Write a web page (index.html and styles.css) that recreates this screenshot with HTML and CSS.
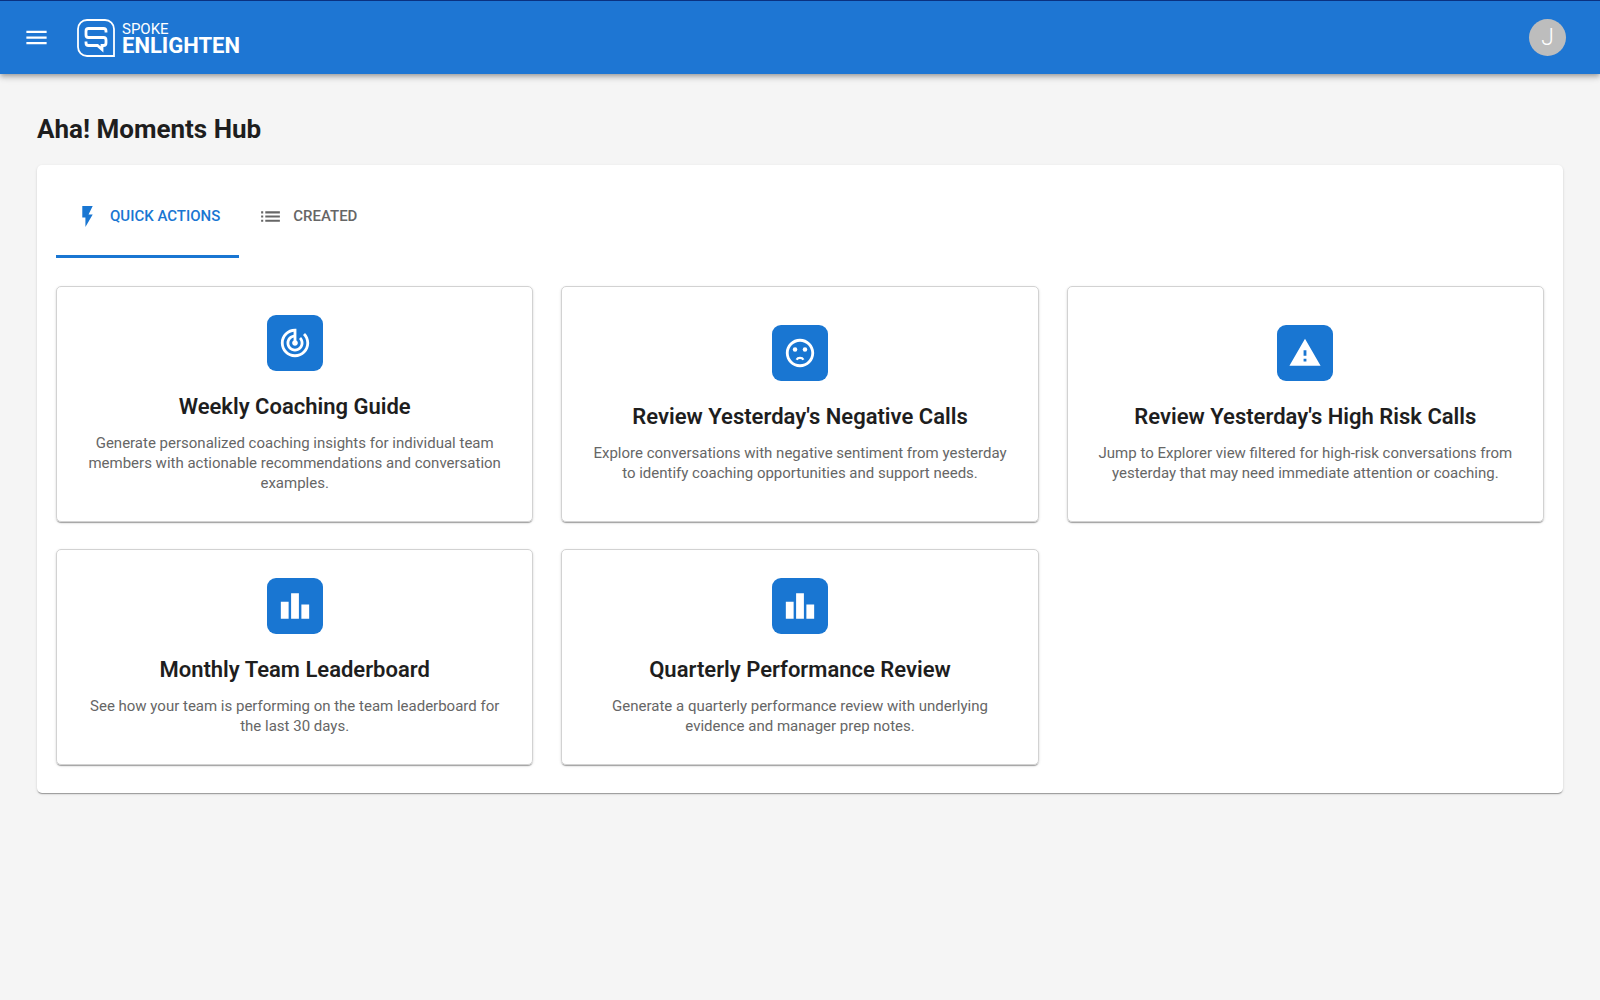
FILE: index.html
```html
<!DOCTYPE html>
<html lang="en">
<head>
  <meta charset="UTF-8" />
  <meta name="viewport" content="width=device-width, initial-scale=1.0" />
  <title>Aha! Moments Hub</title>
  <link rel="stylesheet" href="styles.css">
</head>
<body>
  <header class="app-bar">
    <button class="menu-btn" type="button" aria-label="Open menu">
      <svg viewBox="0 0 24 24"><path d="M3 18h18v-2H3v2zm0-5h18v-2H3v2zm0-7v2h18V6H3z"/></svg>
    </button>
    <a class="brand" href="#">
      <svg class="brand-mark" viewBox="0 0 38 38">
        <path d="M10 1h18a9 9 0 0 1 9 9v27H10a9 9 0 0 1-9-9V10a9 9 0 0 1 9-9z" stroke-width="1.8"/>
        <path d="M29 13.5V12a2.500 2.500 0 0 0-2.500-2.500h-15A2.500 2.500 0 0 0 9 12v4a2.500 2.500 0 0 0 2.500 2.500h15A2.500 2.500 0 0 1 29 21v3a2.500 2.500 0 0 1-2.500 2.500H25v4l-4.500-4h-9A2.500 2.500 0 0 1 9 24v-1.500" stroke-width="2.8"/>
      </svg>
      <span class="brand-text">
        <span class="brand-top">SPOKE</span>
        <span class="brand-name">ENLIGHTEN</span>
      </span>
    </a>
    <button class="avatar" type="button">J</button>
  </header>

  <main class="page">
    <h1>Aha! Moments Hub</h1>
    <section class="panel">
      <div class="tabs" role="tablist">
        <button class="tab active" type="button" role="tab" aria-selected="true">
          <svg viewBox="0 0 24 24"><path d="M7 2v11h3v9l7-12h-4l4-8z"/></svg>
          QUICK ACTIONS
        </button>
        <button class="tab" type="button" role="tab" aria-selected="false">
          <svg viewBox="0 0 24 24"><path d="M3 13h2v-2H3v2zm0 4h2v-2H3v2zm0-8h2V7H3v2zm4 4h14v-2H7v2zm0 4h14v-2H7v2zM7 7v2h14V7H7z"/></svg>
          CREATED
        </button>
      </div>

      <div class="cards">
        <article class="card">
          <div class="card-icon">
            <svg viewBox="0 0 24 24"><path d="M19.07 4.93l-1.410 1.410C19.100 7.790 20 9.790 20 12c0 4.420-3.580 8-8 8s-8-3.580-8-8c0-4.080 3.050-7.440 7-7.930v2.020C8.160 6.570 6 9.030 6 12c0 3.310 2.690 6 6 6s6-2.690 6-6c0-1.660-.67-3.160-1.760-4.240l-1.410 1.410C15.550 9.900 16 10.900 16 12c0 2.210-1.790 4-4 4s-4-1.790-4-4c0-1.860 1.280-3.410 3-3.860v2.140c-.6.35-1 .98-1 1.720 0 1.100.9 2 2 2s2-.9 2-2c0-.74-.4-1.380-1-1.720V2h-1C6.480 2 2 6.480 2 12s4.480 10 10 10 10-4.480 10-10c0-2.760-1.120-5.260-2.930-7.070z"/></svg>
          </div>
          <h2>Weekly Coaching Guide</h2>
          <p>Generate personalized coaching insights for individual team members with actionable recommendations and conversation examples.</p>
        </article>
        <article class="card">
          <div class="card-icon">
            <svg viewBox="0 0 24 24">
              <circle cx="15.5" cy="9.5" r="1.6"/>
              <circle cx="8.5" cy="9.5" r="1.6"/>
              <path d="M9.600 16.700c.9-1.700 3.900-1.700 4.800 0" fill="none" stroke="currentColor" stroke-width="1.6"/>
              <path d="M11.990 2C6.470 2 2 6.480 2 12s4.470 10 9.990 10C17.520 22 22 17.520 22 12S17.520 2 11.990 2zM12 20c-4.420 0-8-3.580-8-8s3.580-8 8-8 8 3.580 8 8-3.580 8-8 8z"/>
            </svg>
          </div>
          <h2>Review Yesterday's Negative Calls</h2>
          <p>Explore conversations with negative sentiment from yesterday to identify coaching opportunities and support needs.</p>
        </article>
        <article class="card">
          <div class="card-icon">
            <svg viewBox="0 0 24 24"><path d="M1 21h22L12 2 1 21zm12-3h-2v-2h2v2zm0-4h-2v-4h2v4z"/></svg>
          </div>
          <h2>Review Yesterday's High Risk Calls</h2>
          <p>Jump to Explorer view filtered for high-risk conversations from yesterday that may need immediate attention or coaching.</p>
        </article>
        <article class="card">
          <div class="card-icon">
            <svg viewBox="0 0 24 24"><path d="M7.5 21H2V9h5.500v12zm7.250-18h-5.500v18h5.500V3zM22 11h-5.500v10H22V11z"/></svg>
          </div>
          <h2>Monthly Team Leaderboard</h2>
          <p>See how your team is performing on the team leaderboard for the last 30 days.</p>
        </article>
        <article class="card">
          <div class="card-icon">
            <svg viewBox="0 0 24 24"><path d="M7.5 21H2V9h5.500v12zm7.250-18h-5.500v18h5.500V3zM22 11h-5.500v10H22V11z"/></svg>
          </div>
          <h2>Quarterly Performance Review</h2>
          <p>Generate a quarterly performance review with underlying evidence and manager prep notes.</p>
        </article>
      </div>
    </section>
  </main>
</body>
</html>
```
FILE: styles.css
```css
* {
  box-sizing: border-box;
}

body {
  margin: 0;
  min-height: 100vh;
  font-family: Roboto, sans-serif;
  background: #f5f5f5;
  color: #1e1e1e;
}

button {
  font-family: inherit;
  border: none;
  background: none;
  padding: 0;
  cursor: pointer;
}

svg {
  display: block;
  fill: currentColor;
}

/* top bar */
.app-bar {
  display: flex;
  align-items: center;
  height: 74px;
  padding: 0 34px 0 23px;
  border-top: 1px solid #0a3180;
  background: #1e76d3;
  color: white;
  box-shadow: 0 2px 4px -1px rgba(0, 0, 0, 0.2), 0 4px 5px rgba(0, 0, 0, 0.14), 0 1px 10px rgba(0, 0, 0, 0.12);
}

.menu-btn {
  color: white;
}

.menu-btn svg {
  width: 27px;
  height: 27px;
}

.brand {
  display: flex;
  align-items: center;
  gap: 7px;
  margin-left: 27px;
  color: white;
  text-decoration: none;
}

.brand-mark {
  width: 38px;
  height: 38px;
  fill: none;
  stroke: white;
}

.brand-text {
  display: flex;
  flex-direction: column;
  padding-top: 2px;
}

.brand-top {
  font-size: 15px;
  line-height: 15px;
}

.brand-name {
  font-size: 22px;
  line-height: 18px;
  font-weight: 700;
}

.avatar {
  width: 37px;
  height: 37px;
  margin-left: auto;
  border-radius: 50%;
  background: #bdbdbd;
  color: white;
  font-size: 23px;
  font-weight: 300;
}

/* content */
.page {
  padding: 38px 37px;
}

h1 {
  margin: 0 0 18px;
  font-size: 26px;
  line-height: 35px;
  font-weight: 700;
}

.panel {
  padding: 19px 19px 28px;
  border-radius: 5px;
  background: white;
  box-shadow: 0 2px 1px -1px rgba(0, 0, 0, 0.2), 0 1px 1px rgba(0, 0, 0, 0.14), 0 1px 3px rgba(0, 0, 0, 0.12);
}

.tabs {
  display: flex;
  margin-bottom: 28px;
}

.tab {
  display: flex;
  align-items: center;
  gap: 10px;
  height: 74px;
  padding: 0 19px 7px;
  border-bottom: 3px solid transparent;
  color: #666;
  font-size: 15px;
  font-weight: 500;
}

.tab svg {
  width: 25px;
  height: 25px;
}

.tab.active {
  border-color: #1976d2;
  color: #1976d2;
}

.cards {
  display: grid;
  grid-template-columns: repeat(3, 1fr);
  gap: 27px 28px;
}

.card {
  display: flex;
  flex-direction: column;
  align-items: center;
  justify-content: center;
  padding: 28px;
  border: 1px solid #d2d2d2;
  border-radius: 5px;
  text-align: center;
  box-shadow: 0 2px 1px -1px rgba(0, 0, 0, 0.2), 0 1px 1px rgba(0, 0, 0, 0.14), 0 1px 3px rgba(0, 0, 0, 0.12);
}

.card-icon {
  display: flex;
  align-items: center;
  justify-content: center;
  width: 56px;
  height: 56px;
  border-radius: 9px;
  background: #1976d2;
  color: white;
}

.card-icon svg {
  width: 34px;
  height: 34px;
}

.card h2 {
  margin: 20px 0 10px;
  font-size: 22px;
  line-height: 32px;
  font-weight: 600;
}

.card p {
  margin: 0;
  font-size: 15px;
  line-height: 20px;
  color: #666;
}

@media (max-width: 1000px) {
  .cards {
    grid-template-columns: 1fr;
  }
}
```
